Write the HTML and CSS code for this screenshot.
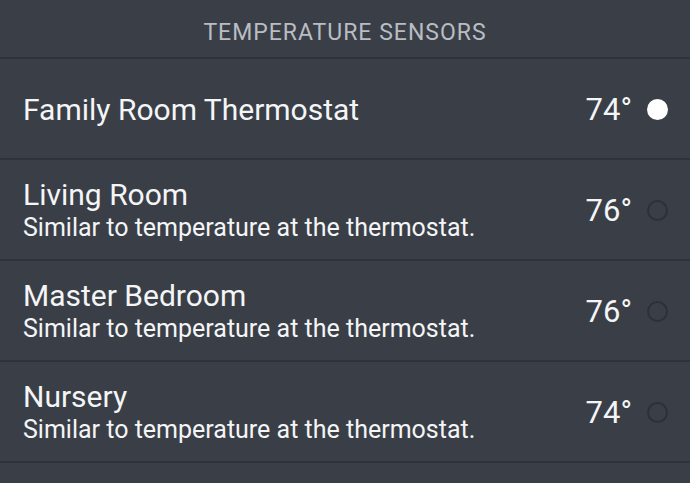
FILE: index.html
```html
<!DOCTYPE html>
<html>
<head>
    <title>Temperature Sensors</title>
    <link rel="stylesheet" href="styles.css">
</head>
<body>
    <h2 class="header">TEMPERATURE SENSORS</h2>

    <ul class="sensors">
        <li class="sensor">
            <div class="info">
                <div class="name">Family Room Thermostat</div>
            </div>
            <span class="temp">74°</span>
            <span class="dot active"></span>
        </li>
        <li class="sensor">
            <div class="info">
                <div class="name">Living Room</div>
                <div class="note">Similar to temperature at the thermostat.</div>
            </div>
            <span class="temp">76°</span>
            <span class="dot"></span>
        </li>
        <li class="sensor">
            <div class="info">
                <div class="name">Master Bedroom</div>
                <div class="note">Similar to temperature at the thermostat.</div>
            </div>
            <span class="temp">76°</span>
            <span class="dot"></span>
        </li>
        <li class="sensor">
            <div class="info">
                <div class="name">Nursery</div>
                <div class="note">Similar to temperature at the thermostat.</div>
            </div>
            <span class="temp">74°</span>
            <span class="dot"></span>
        </li>
    </ul>
</body>
</html>
```

FILE: styles.css
```css
body {
    font-family: Roboto, "Liberation Sans", sans-serif;
    background-color: #3a3f47;
    color: #f4f5f6;
    margin: 0;
    padding: 0;
}

.header {
    margin: 0;
    height: 59px;
    line-height: 66px;
    text-align: center;
    font-size: 23px;
    letter-spacing: 1px;
    font-weight: normal;
    color: #b9bdc3;
    border-bottom: 2px solid #2e3239;
    box-sizing: border-box;
}

.sensors {
    list-style: none;
    margin: 0;
    padding: 0;
}

.sensor {
    display: flex;
    align-items: center;
    height: 101px;
    padding: 2px 22px 0 23px;
    border-bottom: 2px solid #2e3239;
    box-sizing: border-box;
}

.info {
    flex: 1;
}

.name {
    font-size: 30px;
    line-height: 34px;
}

.note {
    font-size: 25px;
    line-height: 32px;
}

.temp {
    font-size: 31px;
    margin-right: 15px;
}

.dot {
    width: 17px;
    height: 17px;
    border-radius: 50%;
    border: 2px solid #2d3137;
}

.dot.active {
    background-color: #fff;
    border-color: #fff;
}
```
